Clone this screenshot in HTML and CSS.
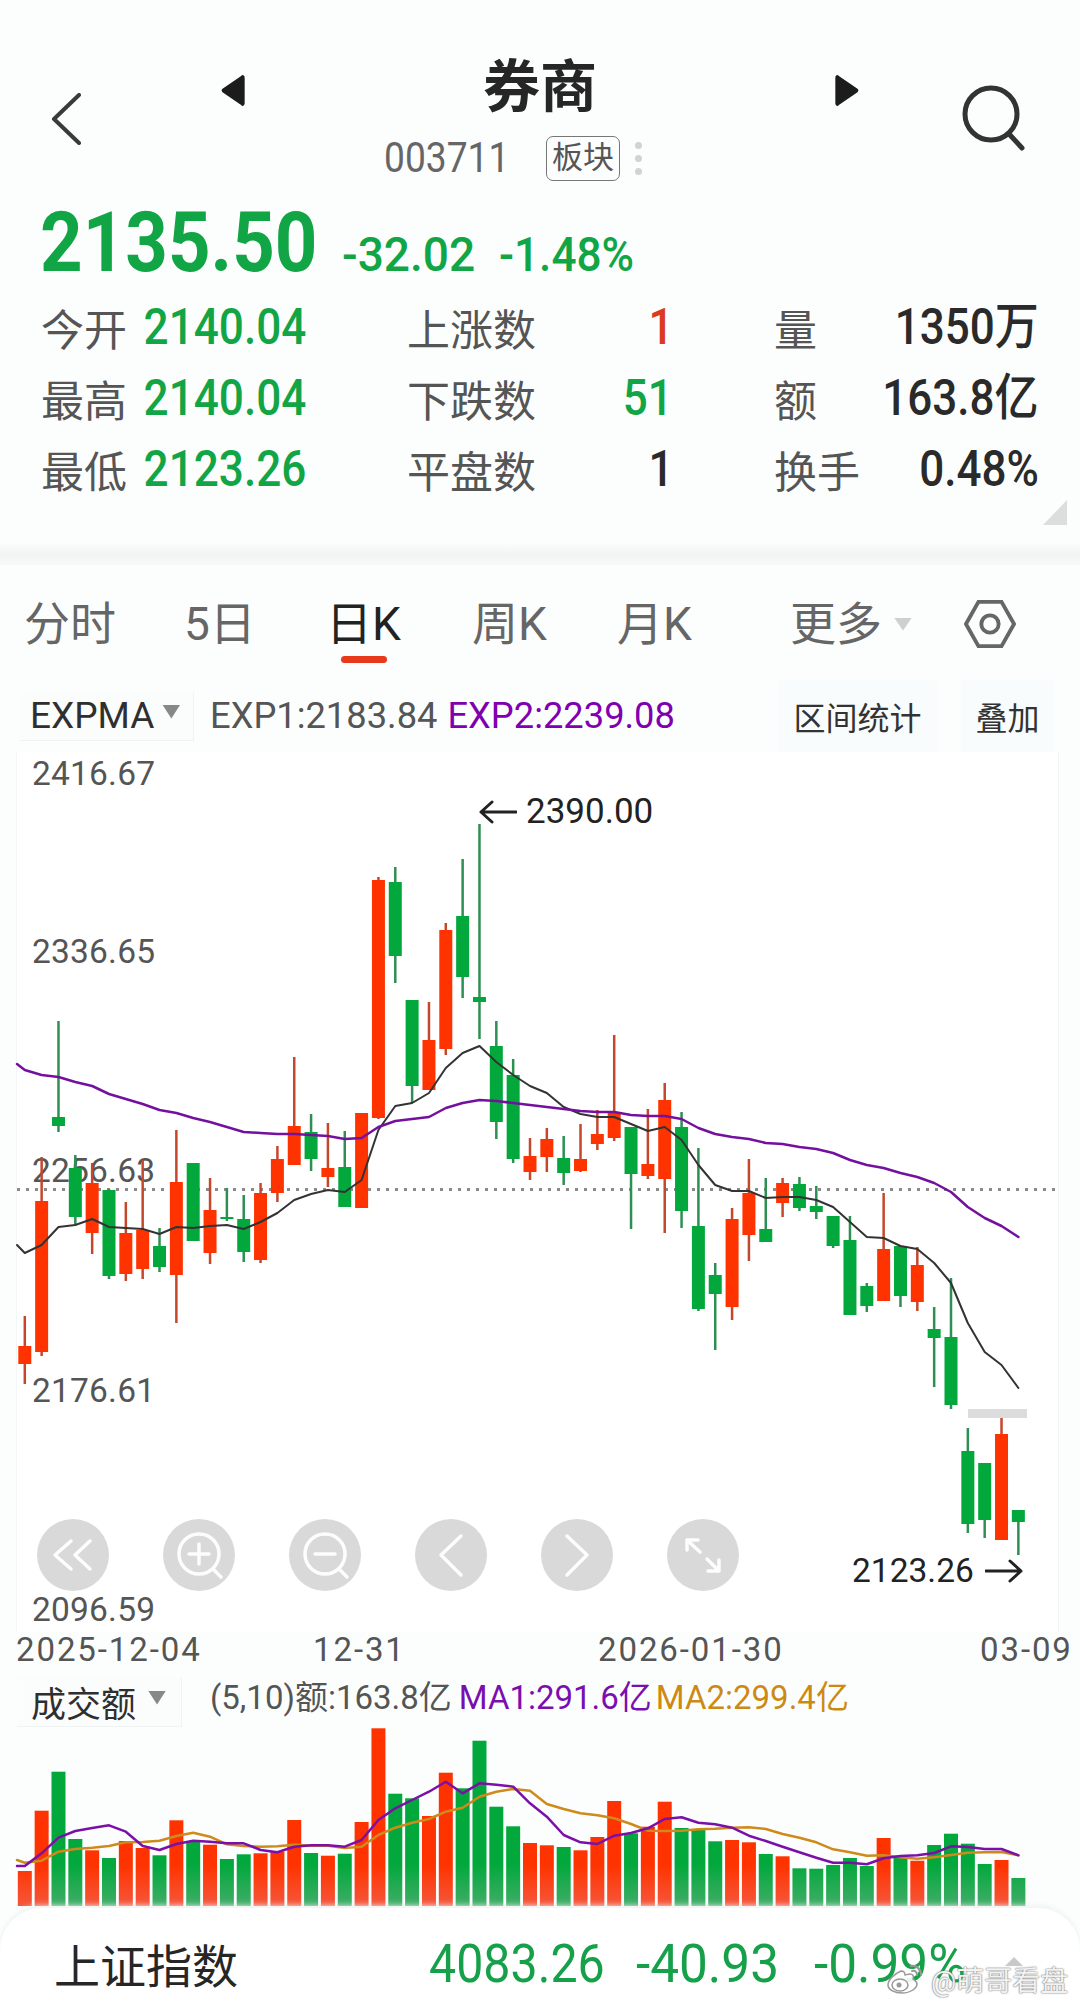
FILE: index.html
```html
<!DOCTYPE html>
<html lang="zh-CN">
<head>
<meta charset="utf-8">
<title>券商</title>
<link rel="stylesheet" href="styles.css">
</head>
<body>
<main class="page">
  <section class="quote">
    <header class="nav">
      <svg class="back" viewBox="0 0 30 52"><path d="M28 2 3 26l25 24"/></svg>
      <div class="nav-center">
        <div class="title-row">
          <svg class="flip" viewBox="0 0 24 28"><path d="M22 3v22c0 2-2 3-3 1.500L3 15.500c-1-1-1-2 0-3L19 1.500C20 0 22 1 22 3z"/></svg>
          <h1 class="title">券商</h1>
          <svg class="flip" viewBox="0 0 24 28"><path d="M2 3v22c0 2 2 3 3 1.500l16-11c1-1 1-2 0-3L5 1.500C4 0 2 1 2 3z"/></svg>
        </div>
        <div class="sub-row">
          <span class="code">003711</span>
          <span class="badge">板块</span>
          <span class="more-dots"><i></i><i></i><i></i></span>
        </div>
      </div>
      <svg class="search" viewBox="0 0 64 66"><circle cx="29" cy="29" r="26"/><path d="M48 50l12 13"/></svg>
    </header>

    <div class="price-row">
      <span class="price">2135.50</span>
      <span class="change">-32.02</span>
      <span class="change change-pct">-1.48%</span>
    </div>

    <div class="stats">
      <div class="stat"><span class="stat-label">今开</span><span class="val down val-left">2140.04</span></div>
      <div class="stat"><span class="stat-label">上涨数</span><span class="val up">1</span></div>
      <div class="stat"><span class="stat-label">量</span><span class="val">1350万</span></div>
      <div class="stat"><span class="stat-label">最高</span><span class="val down val-left">2140.04</span></div>
      <div class="stat"><span class="stat-label">下跌数</span><span class="val down">51</span></div>
      <div class="stat"><span class="stat-label">额</span><span class="val">163.8亿</span></div>
      <div class="stat"><span class="stat-label">最低</span><span class="val down val-left">2123.26</span></div>
      <div class="stat"><span class="stat-label">平盘数</span><span class="val">1</span></div>
      <div class="stat"><span class="stat-label">换手</span><span class="val">0.48%</span></div>
    </div>
    <i class="corner"></i>
  </section>

  <div class="divider"></div>

  <nav class="tabs">
    <span class="tab">分时</span>
    <span class="tab">5日</span>
    <span class="tab tab-active">日K</span>
    <span class="tab">周K</span>
    <span class="tab">月K</span>
    <span class="tab tab-more">更多<i class="caret caret-light"></i></span>
    <svg class="hex" viewBox="0 0 54 52"><path d="M15 3h24l13 23-13 23H15L2 26z"/><circle cx="27" cy="26" r="9"/></svg>
  </nav>

  <div class="indicator-row">
    <span class="select">EXPMA<i class="caret"></i></span>
    <span class="exp exp1">EXP1:2183.84</span>
    <span class="exp exp2">EXP2:2239.08</span>
    <span class="tool tool-first">区间统计</span>
    <span class="tool">叠加</span>
  </div>

  <div class="plot">
    <span class="ylab y1">2416.67</span>
    <span class="ylab y2">2336.65</span>
    <span class="ylab y3">2256.63</span>
    <span class="ylab y4">2176.61</span>
    <span class="ylab y5">2096.59</span>
    <svg id="kline" class="kline" viewBox="0 752 1080 880"></svg>
    <span class="patch"></span>
    <span class="mark mark-high"><svg class="mark-arrow" viewBox="0 0 38 24"><path d="M37 12H2M13 2 2 12l11 10"/></svg>2390.00</span>
    <span class="mark mark-low">2123.26<svg class="mark-arrow" viewBox="0 0 38 24"><path d="M1 12h35M25 2l11 10-11 10"/></svg></span>
    <div class="controls">
      <button class="ctl"><svg viewBox="0 0 72 72"><path d="M34 22 18 36l16 14M53 22 38 36l15 14"/></svg></button>
      <button class="ctl"><svg viewBox="0 0 72 72"><circle cx="36" cy="35" r="20"/><path d="M36 25v20M26 35h20M50 50l8 8"/></svg></button>
      <button class="ctl"><svg viewBox="0 0 72 72"><circle cx="36" cy="35" r="20"/><path d="M26 35h20M50 50l8 8"/></svg></button>
      <button class="ctl"><svg viewBox="0 0 72 72"><path d="M46 17 26 36l20 20"/></svg></button>
      <button class="ctl"><svg viewBox="0 0 72 72"><path d="M26 17l20 19-20 20"/></svg></button>
      <button class="ctl"><svg viewBox="0 0 72 72"><path d="M20 21l13 12M40 40l12 12M20 31V21h11M52 41v11H41"/></svg></button>
    </div>
  </div>

  <div class="axis">
    <span>2025-12-04</span>
    <span>12-31</span>
    <span>2026-01-30</span>
    <span>03-09</span>
  </div>

  <div class="vol-head">
    <span class="select select-vol">成交额<i class="caret"></i></span>
    <span class="legend">(5,10)额:163.8亿</span>
    <span class="legend legend-ma1">MA1:291.6亿</span>
    <span class="legend legend-ma2">MA2:299.4亿</span>
  </div>
  <svg id="volume" class="volume" viewBox="0 1727 1080 181">
    <defs>
      <linearGradient id="fadeRed" gradientUnits="userSpaceOnUse" x1="0" y1="1865" x2="0" y2="1906">
        <stop offset="0" stop-color="#ff3300"/><stop offset="1" stop-color="#f4573c"/>
      </linearGradient>
      <linearGradient id="fadeGreen" gradientUnits="userSpaceOnUse" x1="0" y1="1865" x2="0" y2="1906">
        <stop offset="0" stop-color="#03a83d"/><stop offset="1" stop-color="#41ad68"/>
      </linearGradient>
    </defs>
  </svg>

  <footer class="ticker">
    <span class="ticker-name">上证指数</span>
    <span class="ticker-num">4083.26</span>
    <span class="ticker-num ticker-wide">-40.93</span>
    <span class="ticker-num ticker-wide">-0.99%</span>
    <i class="ticker-up"></i>
    <div class="watermark">
      <svg class="weibo" viewBox="0 0 38 32">
        <path class="weibo-body" d="M15 8C8 11 2 17 2 22c0 5 7 8 14 8 9 0 15-5 15-9 0-3-3-4-4-5 1-3 0-5-3-5-2 0-4 1-5 1 0-3-2-4-4-4z"/>
        <ellipse class="weibo-face" cx="14" cy="22" rx="8" ry="6"/>
        <circle class="weibo-eye" cx="13" cy="22" r="2.500"/>
        <path class="weibo-arc" d="M25 3c5-1 10 3 10 9M26 8c3-1 5 1 5 4"/>
      </svg>
      <span>@萌哥看盘</span>
    </div>
  </footer>
</main>
<script src="app.js"></script>
</body>
</html>
```
FILE: styles.css
```css
* { box-sizing: border-box; }
html, body { margin: 0; padding: 0; }
body {
  width: 1080px;
  height: 2002px;
  overflow: hidden;
  background: #fcfefe;
  color: #2a2a2a;
  font-family: Roboto, "Noto Sans CJK SC", sans-serif;
}
.page { width: 1080px; height: 2002px; display: flex; flex-direction: column; overflow: hidden; }

/* Quote header */
.quote { position: relative; height: 542px; padding-top: 50px; }
.nav { display: flex; align-items: center; padding-left: 51px; }
.back { width: 30px; height: 52px; margin-top: 6px; fill: none; stroke: #3a3a3a; stroke-width: 4; stroke-linecap: round; stroke-linejoin: round; }
.nav-center { width: 642px; margin-left: 138px; }
.title-row { display: flex; justify-content: space-between; align-items: center; height: 70px; }
.flip { width: 28px; height: 33px; margin-top: 10px; fill: #1c1c1c; }
.title { margin: 0 0 -6px; font-size: 57px; font-weight: 700; line-height: 70px; color: #262626; }
.sub-row { display: flex; align-items: center; margin: 15px 0 0 165px; height: 46px; }
.code { display: inline-block; width: 162px; font-size: 42px; color: #666; transform: scaleX(.885); transform-origin: left center; line-height: 46px; }
.badge { width: 74px; height: 45px; border: 1.500px solid #777; border-radius: 7px; font-size: 31px; line-height: 41px; text-align: center; color: #555; white-space: nowrap; }
.more-dots { display: flex; flex-direction: column; gap: 6px; margin-left: 15px; }
.more-dots i { width: 7px; height: 7px; border-radius: 50%; background: #d2d2d2; }
.search { width: 64px; height: 66px; margin: 4px 0 0 101px; fill: none; stroke: #333; stroke-width: 5; stroke-linecap: round; }

.price-row { display: flex; align-items: baseline; padding-left: 40px; margin-top: 20px; color: #12a545; line-height: 84px; height: 84px; }
.price { display: inline-block; width: 302px; font-size: 84px; font-weight: 700; transform: scaleX(.885); transform-origin: left bottom; }
.change { display: inline-block; width: 157px; font-size: 48px; font-weight: 500; transform: scaleX(.96); transform-origin: left bottom; white-space: nowrap; }
.change-pct { width: auto; transform: scaleX(.92); }

.stats { display: grid; grid-template-columns: 265px 266px 265px; column-gap: 101px; grid-auto-rows: 71px; margin: 7px 0 0 41px; }
.stat { display: flex; justify-content: space-between; align-items: baseline; line-height: 71px; white-space: nowrap; }
.stat-label { font-size: 43px; color: #555; transform: translateY(2px); }
.val { display: inline-block; font-size: 50px; font-weight: 500; color: #2a2a2a; transform: scaleX(.88); transform-origin: right bottom; }
.val-left { margin-left: -30px; transform: scaleX(.883); }
.down { color: #12a545; }
.up { color: #dc3a1e; }
.corner { position: absolute; left: 1043px; top: 500px; width: 24px; height: 25px; background: #dcdede; clip-path: polygon(100% 0, 100% 100%, 0 100%); }

.divider { height: 23px; background: linear-gradient(#fcfefe, #f2f4f4 55%, #f8fafa); }

/* Tabs */
.tabs { display: grid; grid-template-columns: 160px 142px 146px 145px 173px 174px auto; align-items: center; height: 115px; padding: 3px 0 0 24px; }
.tab { position: relative; font-size: 46px; line-height: 58px; color: #666; white-space: nowrap; }
.tab-active { color: #222; }
.tab-active::after { content: ""; position: absolute; left: 15px; top: 61px; width: 46px; height: 7px; border-radius: 4px; background: #e8391a; }
.tab-more { display: flex; align-items: center; gap: 12px; }
.hex { width: 52px; height: 50px; fill: none; stroke: #666; stroke-width: 4; }
.caret { display: inline-block; width: 18px; height: 14px; background: #888; clip-path: polygon(0 0, 100% 0, 50% 100%); }
.caret-light { background: #cfcfcf; height: 13px; }

/* Indicator */
.indicator-row { display: flex; align-items: center; height: 72px; padding: 0 26px 0 20px; }
.select { display: flex; align-items: center; gap: 8px; height: 49px; width: 174px; padding-left: 10px; font-size: 37px; color: #2f2f2f; background: #fbfcfc; border-bottom: 1px solid #f0f3f3; border-right: 1px solid #f0f3f3; }
.select .caret { margin-top: -8px; }
.exp { font-size: 36.300px; line-height: 40px; white-space: nowrap; margin-left: 10px; color: #555; }
.exp1 { margin-left: 16px; }
.exp2 { color: #8000b0; }
.tool { display: flex; align-items: center; justify-content: center; height: 72px; width: 93px; font-size: 32px; color: #333; background: #f9fcfc; margin-left: 24px; white-space: nowrap; }
.tool-first { width: 159px; margin-left: auto; }

/* K-line plot */
.plot { position: relative; height: 880px; margin: 0 21px 0 16px; background: #fff; border-left: 1px solid #f3f6f6; border-right: 1px solid #f1f5f5; }
.kline { position: absolute; left: -17px; top: 0; width: 1080px; height: 880px; }
.ylab, .mark { position: absolute; font-size: 33.500px; line-height: 38px; white-space: nowrap; }
.ylab { left: 15px; color: #555; letter-spacing: .2px; }
.y1 { top: 3px; }
.y2 { top: 181px; }
.y3 { top: 400px; }
.y4 { top: 620px; }
.y5 { top: 839px; }
.patch { position: absolute; left: 951px; top: 657px; width: 59px; height: 9px; background: #dcdcdc; }
.mark { display: flex; align-items: center; color: #222; }
.mark-high { left: 462px; top: 41px; gap: 9px; font-size: 35px; }
.mark-low { left: 835px; top: 800px; gap: 11px; }
.mark-arrow { width: 38px; height: 24px; fill: none; stroke: #222; stroke-width: 3; stroke-linecap: round; stroke-linejoin: round; }
.controls { position: absolute; left: 20px; top: 767px; display: flex; gap: 54px; }
.ctl { width: 72px; height: 72px; padding: 0; border: 0; border-radius: 50%; background: #d9d9d9; }
.ctl svg { display: block; width: 72px; height: 72px; fill: none; stroke: #fdfdfd; stroke-width: 3.500; stroke-linecap: round; stroke-linejoin: round; }

/* Axis */
.axis { display: grid; grid-template-columns: 297px 285px 382px auto; height: 35px; padding-left: 16px; font-size: 33px; line-height: 35px; color: #555; letter-spacing: 1.900px; white-space: nowrap; }

/* Volume */
.vol-head { display: flex; align-items: center; height: 50px; margin-top: 10px; padding-left: 17px; }
.select-vol { width: 165px; height: 50px; padding-left: 14px; gap: 12px; font-size: 35px; }
.legend { font-size: 33px; line-height: 38px; color: #555; margin: -8px 0 0 28px; white-space: nowrap; }
.legend-ma1 { color: #7a0fb0; margin-left: 7px; }
.legend-ma2 { color: #cc8a14; margin-left: 4px; }
.volume { display: block; width: 1080px; height: 181px; flex: none; }

/* Ticker */
.ticker { position: relative; flex: 1; display: grid; grid-template-columns: 375px 207px 178px auto; align-items: center; padding: 16px 0 0 54px; background: #fff; border-radius: 42px 42px 0 0; box-shadow: 0 -2px 6px #eef1f1; }
.ticker-name { font-size: 46px; color: #262626; white-space: nowrap; }
.ticker-num { display: inline-block; font-size: 54px; color: #16a04a; transform: scaleX(.895); transform-origin: left center; white-space: nowrap; }
.ticker-wide { transform: scaleX(.95); }
.ticker-up { position: absolute; left: 1005px; top: 49px; width: 18px; height: 9px; background: #c9c9c9; clip-path: polygon(50% 0, 100% 100%, 0 100%); }
.watermark { position: absolute; left: 886px; top: 51px; display: flex; align-items: center; gap: 7px; font-size: 28px; color: rgba(255,255,255,.92); text-shadow: 0 0 2px #777, 0 0 1px #777; white-space: nowrap; }
.weibo { width: 38px; height: 32px; }
.weibo-body { fill: rgba(255,255,255,.9); stroke: #999; stroke-width: 1.500; }
.weibo-face { fill: rgba(255,255,255,.9); stroke: #999; stroke-width: 1.500; }
.weibo-eye { fill: #999; }
.weibo-arc { fill: none; stroke: #999; stroke-width: 2; stroke-linecap: round; }

/* Chart marks drawn by app.js */
.wick { stroke-width: 2.500; }
.wick-up { stroke: #c4472c; }
.wick-down { stroke: #2e8f53; }
.body-up { fill: #ff3300; }
.body-down { fill: #03a83d; }
.guide { stroke: #8a8a8a; stroke-width: 3; stroke-dasharray: 3 6; }
.line { fill: none; stroke-linejoin: round; stroke-linecap: round; }
.line-exp1 { stroke: #333; stroke-width: 2; }
.line-exp2 { stroke: #74109f; stroke-width: 2.500; }
.line-ma1 { stroke: #7a10a8; stroke-width: 2.500; }
.line-ma2 { stroke: #cf8a1c; stroke-width: 2.500; }
.bar-up { fill: url(#fadeRed); }
.bar-down { fill: url(#fadeGreen); }
```
FILE: app.js
```js
var NS = 'http://www.w3.org/2000/svg';
var X0 = 24.8, STEP = 16.84;
function xAt(i) { return X0 + STEP * i; }
function el(parent, tag, attrs) {
  var n = document.createElementNS(NS, tag);
  for (var k in attrs) n.setAttribute(k, attrs[k]);
  parent.appendChild(n);
  return n;
}
// direction (1 up, 0 down), wick top, body top, body bottom, wick bottom
var candles = [
[1,1316,1346,1364,1384],[1,1157,1201,1352,1356],[0,1021,1117,1126,1132],[0,1155,1168,1217,1225],
[1,1163,1183,1233,1254],[0,1189,1190,1276,1279],[1,1202,1233,1274,1281],[1,1160,1230,1269,1279],
[0,1228,1246,1267,1272],[1,1130,1182,1275,1323],[0,1163,1163,1241,1241],[1,1178,1210,1253,1264],
[0,1188,1217,1219,1221],[0,1195,1219,1252,1262],[1,1183,1193,1260,1263],[1,1146,1159,1193,1202],
[1,1057,1126,1165,1165],[0,1114,1132,1159,1171],[1,1123,1168,1177,1187],[0,1131,1167,1207,1207],
[1,1113,1113,1208,1208],[1,877,880,1118,1119],[0,867,882,956,983],[0,1000,1000,1086,1103],
[1,1002,1040,1090,1090],[1,923,930,1049,1055],[0,859,916,977,998],[0,824,997,1002,1039],
[0,1021,1046,1122,1139],[0,1059,1075,1159,1163],[1,1138,1156,1172,1180],[1,1128,1139,1157,1172],
[0,1136,1158,1173,1185],[1,1124,1159,1171,1172],[1,1110,1134,1144,1150],[1,1035,1112,1138,1141],
[0,1127,1127,1174,1229],[1,1109,1164,1176,1179],[1,1083,1100,1179,1233],[0,1112,1127,1211,1228],
[0,1148,1226,1309,1311],[0,1263,1275,1294,1350],[1,1208,1219,1307,1320],[1,1159,1193,1235,1261],
[0,1178,1229,1242,1242],[1,1178,1183,1203,1217],[0,1177,1184,1208,1211],[0,1186,1206,1212,1219],
[0,1216,1216,1246,1248],[0,1216,1240,1315,1315],[0,1283,1286,1306,1312],[1,1193,1249,1301,1301],
[0,1246,1246,1296,1307],[1,1247,1265,1302,1311],[0,1307,1329,1338,1387],[0,1278,1337,1405,1409],
[0,1428,1451,1524,1533],[0,1463,1463,1520,1538],[1,1418,1434,1540,1540],[0,1510,1510,1522,1555]
];
var exp1 = [1253,1245,1227,1225,1219,1227,1228,1229,1234,1227,1228,1226,1225,1229,1222,1213,1200,1194,1190,1192,1180,1130,1106,1103,1093,1068,1053,1046,1062,1075,1086,1093,1107,1114,1117,1117,1124,1131,1127,1140,1165,1185,1191,1191,1198,1197,1197,1200,1207,1222,1237,1238,1246,1249,1263,1283,1323,1352,1365,1388];
var exp2 = [1070,1075,1077,1082,1086,1094,1099,1104,1110,1113,1118,1122,1127,1132,1133,1134,1134,1135,1136,1139,1138,1127,1121,1119,1117,1108,1103,1100,1101,1103,1105,1107,1109,1111,1112,1112,1115,1116,1116,1119,1128,1134,1137,1139,1143,1144,1147,1149,1153,1160,1165,1168,1173,1177,1183,1192,1207,1218,1226,1237];
// bar tops and moving averages are read in tripled pixels from y = 1670
var barTops = [603,422,305,507,541,564,513,534,556,451,515,524,567,553,550,545,450,549,557,551,456,175,371,385,438,308,355,212,410,469,519,526,531,541,501,393,490,470,395,474,480,514,510,517,552,559,595,596,585,564,588,504,560,572,525,491,521,582,570,624];
var ma1 = [588,550,503,483,474,466,485,528,540,522,512,515,520,520,540,547,530,526,526,530,510,450,415,390,365,335,370,340,344,350,400,440,495,517,522,497,489,475,447,442,458,463,473,497,513,530,547,563,578,578,583,565,558,556,549,529,531,537,537,556];
var ma2 = [578,572,545,537,533,528,517,516,512,498,488,500,523,528,530,529,524,527,527,534,530,495,473,458,447,425,413,380,365,357,362,402,417,430,436,445,462,482,483,482,478,476,473,472,477,492,503,517,538,547,557,556,562,566,562,555,548,547,546,556];

function poly(svg, values, cls, start) {
  var pts = start ? [start] : [];
  values.forEach(function (y, i) { pts.push(xAt(i).toFixed(1) + ',' + y); });
  el(svg, 'polyline', { points: pts.join(' '), 'class': 'line ' + cls });
}

var kline = document.getElementById('kline');
el(kline, 'line', { x1: 17, x2: 1056, y1: 1189.5, y2: 1189.5, 'class': 'guide' });
candles.forEach(function (c, i) {
  var x = xAt(i), side = c[0] ? 'up' : 'down';
  el(kline, 'line', { x1: x, x2: x, y1: c[1], y2: c[4], 'class': 'wick wick-' + side });
  el(kline, 'rect', { x: x - 6.5, y: c[2], width: 13, height: Math.max(c[3] - c[2], 2), 'class': 'body-' + side });
});
poly(kline, exp1, 'line-exp1', '17,1245');
poly(kline, exp2, 'line-exp2', '17,1064');

var volume = document.getElementById('volume');
barTops.forEach(function (t, i) {
  var y = 1670 + t / 3;
  el(volume, 'rect', { x: xAt(i) - 7, y: y.toFixed(1), width: 14, height: (1906 - y).toFixed(1), 'class': candles[i][0] ? 'bar-up' : 'bar-down' });
});
function toY(list) { return list.map(function (t) { return (1670 + t / 3).toFixed(1); }); }
poly(volume, toY(ma2), 'line-ma2', '17,1860');
poly(volume, toY(ma1), 'line-ma1', '17,1866');
```
